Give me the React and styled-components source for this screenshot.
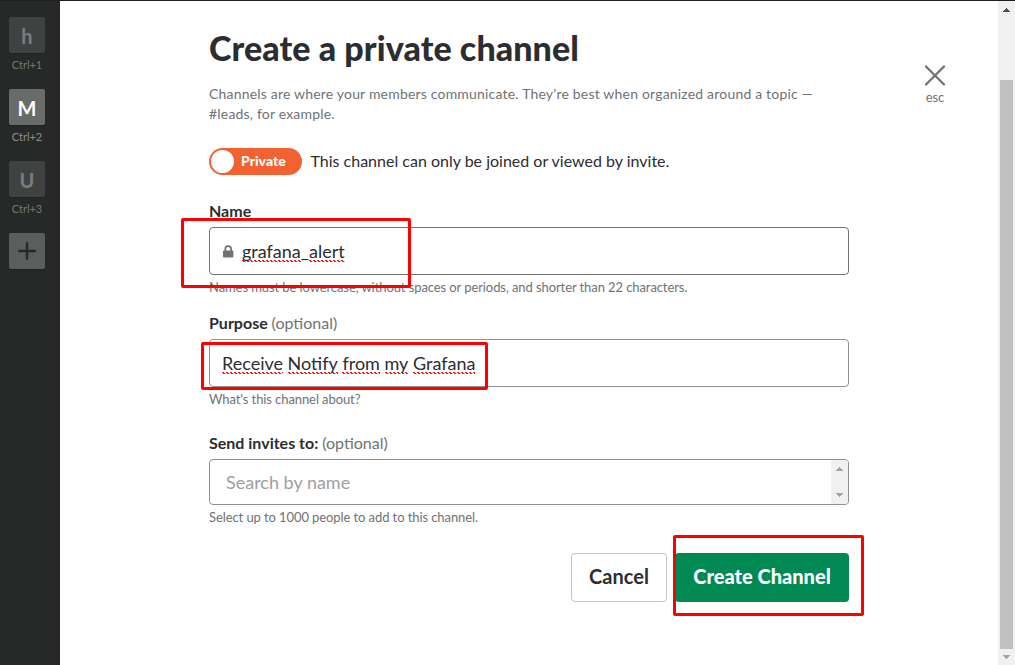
import React from "react";
import styled, { createGlobalStyle } from "styled-components";

const GlobalStyle = createGlobalStyle`
  * { box-sizing: border-box; }
  html, body { margin: 0; padding: 0; overflow: hidden; }
  body { font-family: Lato, "Open Sans", sans-serif; color: #2c2d30; background: #fff; }
`;

const Window = styled.div`
  position: relative;
  display: flex;
  width: 1015px;
  height: 665px;
  border-top: 1px solid #1f2022;
  background: #fff;
  overflow: hidden;
`;

const Sidebar = styled.nav`
  width: 60px;
  flex: none;
  display: flex;
  flex-direction: column;
  padding: 16px 0 0 9px;
  background: #272928;
`;

const Team = styled.div`
  width: 36px;
  height: 72px;
  display: flex;
  flex-direction: column;
  align-items: center;
`;

const TeamIcon = styled.div`
  width: 36px;
  height: 36px;
  flex: none;
  display: flex;
  align-items: center;
  justify-content: center;
  border-radius: 2px;
  background: ${(p) => (p.$active ? "#696b6a" : p.$add ? "#5c5e5d" : "#404241")};
  color: ${(p) => (p.$active ? "#fff" : "#7c7e7d")};
  font: 700 20px/36px Lato, sans-serif;
  padding-top: ${(p) => (p.$add ? 0 : 1)}px;
  box-shadow: 0 1px 1px rgba(0, 0, 0, 0.2);
`;

const Shortcut = styled.div`
  margin-top: 4px;
  font: 400 11px/16px Lato, sans-serif;
  white-space: nowrap;
  color: ${(p) => (p.$active ? "#8d8f8e" : "#757776")};
`;

const Main = styled.main`
  flex: 1;
  display: flex;
  align-items: flex-start;
  padding-left: 149px;
`;

const Form = styled.form`
  width: 640px;
  display: flex;
  flex-direction: column;
`;

const Title = styled.h1`
  margin: 26px 0 0;
  font-size: 34px;
  line-height: 42px;
  font-weight: 900;
  letter-spacing: 0.08px;
  white-space: nowrap;
`;

const Intro = styled.p`
  margin: 15px 0 0;
  font-size: 14px;
  line-height: 20px;
  letter-spacing: 0.19px;
  color: #717274;
`;

const PrivacyRow = styled.div`
  display: flex;
  align-items: center;
  gap: 8.5px;
  height: 27px;
  margin-top: 24px;
  font-size: 16px;
  white-space: nowrap;
`;

const PrivacyText = styled.span`
  padding-bottom: 2px;
`;

const Toggle = styled.div`
  width: 93px;
  height: 27px;
  display: flex;
  align-items: center;
  gap: 7px;
  padding-left: 2px;
  border-radius: 14px;
  background: #f26130;
  color: #fff;
  font-size: 14px;
  line-height: 18px;
  font-weight: 900;
`;

const ToggleText = styled.span`
  padding-bottom: 2px;
`;

const Knob = styled.span`
  width: 23px;
  height: 23px;
  border-radius: 50%;
  background: #fff;
`;

const Label = styled.label`
  margin-top: ${(p) => p.$top}px;
  font-size: 16px;
  line-height: 24px;
  font-weight: 700;
  white-space: nowrap;
`;

const Optional = styled.span`
  font-weight: 400;
  color: #717274;
`;

const Field = styled.div`
  display: flex;
  align-items: center;
  height: ${(p) => p.$height || 48}px;
  margin-top: 4px;
  padding-left: ${(p) => p.$indent || 12}px;
  border: 1px solid ${(p) => (p.$dark ? "#717274" : "#919193")};
  border-radius: 4px;
  font-size: 18px;
  line-height: 24px;
  white-space: pre;
  overflow: hidden;
`;

const LockIcon = styled.svg`
  width: 12px;
  height: 13px;
  margin-right: 8px;
`;

const Misspelled = styled.span`
  background:
    linear-gradient(90deg, #f01818 2px, transparent 2px) 0 calc(100% - 2px) / 4px 1px repeat-x,
    linear-gradient(90deg, #f5a0a0 1px, transparent 1px 2px, #f01818 2px 4px) 3px calc(100% - 1px) / 4px 1px repeat-x;
`;

const Placeholder = styled.span`
  flex: 1;
  color: #9e9ea0;
`;

const Hint = styled.p`
  margin: 2px 0 0;
  font-size: 13px;
  line-height: 20px;
  letter-spacing: -0.088px;
  white-space: nowrap;
  color: #717274;
`;

const FieldScroll = styled.div`
  width: 17px;
  height: 100%;
  display: flex;
  flex-direction: column;
  align-items: center;
  justify-content: space-between;
  padding: 7px 0;
  background: #f0f0f0;
`;

const Actions = styled.div`
  display: flex;
  justify-content: flex-end;
  gap: 8px;
  margin-top: 26px;
`;

const Button = styled.button`
  width: ${(p) => (p.$primary ? 174 : 96)}px;
  height: 49px;
  padding: 0 0 3px;
  border: ${(p) => (p.$primary ? "0" : "1px solid #c3c3c4")};
  border-radius: 4px;
  background: ${(p) => (p.$primary ? "#008952" : "#fff")};
  color: ${(p) => (p.$primary ? "#fff" : "#2c2d30")};
  font: ${(p) => (p.$primary ? 900 : 700)} 20px/24px Lato, sans-serif;
  white-space: nowrap;
`;

const Close = styled.div`
  width: 40px;
  margin: 63px 0 0 66px;
  display: flex;
  flex-direction: column;
  align-items: center;
  gap: 1px;
  font-size: 13px;
  line-height: 20px;
  letter-spacing: -0.1px;
  color: #717274;
`;

const Scrollbar = styled.div`
  width: 17px;
  flex: none;
  display: flex;
  flex-direction: column;
  align-items: center;
  padding: 7px 0 5px;
  background: #f0f0f0;
`;

const Thumb = styled.div`
  width: 13px;
  height: 569px;
  margin: 68px 0 6px;
  background: #c0c0c0;
`;

const Highlight = styled.div`
  position: absolute;
  left: ${(p) => p.$x}px;
  top: ${(p) => p.$y - 1}px;
  width: ${(p) => p.$w}px;
  height: ${(p) => p.$h}px;
  border: 3px solid #fe0000;
  border-radius: 2px;
  pointer-events: none;
`;

const Arrow = ({ down, color }) => (
  <svg width="7" height="4" viewBox="0 0 7 4" fill={color} shapeRendering="crispEdges">
    {down ? <path d="M0 0h7v1H6v1H5v1H4v1H3V3H2V2H1V1H0z" /> : <path d="M0 4h7V3H6V2H5V1H4V0H3v1H2v1H1v1H0z" />}
  </svg>
);

const teams = [
  { letter: "h", key: "Ctrl+1" },
  { letter: "M", key: "Ctrl+2", active: true },
  { letter: "U", key: "Ctrl+3" },
];

const purpose = ["Receive", "Notify", "from", "my", "Grafana"];

export default function App() {
  return (
    <>
      <GlobalStyle />
      <Window>
        <Sidebar>
          {teams.map((t) => (
            <Team key={t.key}>
              <TeamIcon $active={t.active}>{t.letter}</TeamIcon>
              <Shortcut $active={t.active}>{t.key}</Shortcut>
            </Team>
          ))}
          <TeamIcon $add>
            <svg width="18" height="18" viewBox="0 0 18 18" stroke="#272928" strokeWidth="2.4" strokeLinecap="round">
              <path d="M9 1.2v15.6M1.2 9h15.6" />
            </svg>
          </TeamIcon>
        </Sidebar>
        <Main>
          <Form>
            <Title>Create a private channel</Title>
            <Intro>
              Channels are where your members communicate. They’re best when organized around a topic —
              <br />
              #leads, for example.
            </Intro>
            <PrivacyRow>
              <Toggle>
                <Knob />
                <ToggleText>Private</ToggleText>
              </Toggle>
              <PrivacyText>This channel can only be joined or viewed by invite.</PrivacyText>
            </PrivacyRow>
            <Label $top={24}>Name</Label>
            <Field $dark>
              <LockIcon viewBox="0 0 12 13">
                <rect x="1" y="5.5" width="10.4" height="7" rx="1" fill="#717274" />
                <path d="M3.3 6V4a2.9 2.9 0 0 1 5.8 0v2" fill="none" stroke="#717274" strokeWidth="1.7" />
              </LockIcon>
              <Misspelled>grafana</Misspelled>_<Misspelled>alert</Misspelled>
            </Field>
            <Hint>Names must be lowercase, without spaces or periods, and shorter than 22 characters.</Hint>
            <Label $top={14}>
              Purpose <Optional>(optional)</Optional>
            </Label>
            <Field>
              {purpose.map((word, i) => (
                <React.Fragment key={word}>
                  {i > 0 && <span> </span>}
                  <Misspelled>{word}</Misspelled>
                </React.Fragment>
              ))}
            </Field>
            <Hint>What's this channel about?</Hint>
            <Label $top={22}>
              Send invites to: <Optional>(optional)</Optional>
            </Label>
            <Field $height={46} $indent={16}>
              <Placeholder>Search by name</Placeholder>
              <FieldScroll>
                <Arrow color="#a3a3a3" />
                <Arrow down color="#a3a3a3" />
              </FieldScroll>
            </Field>
            <Hint>Select up to 1000 people to add to this channel.</Hint>
            <Actions>
              <Button type="button">Cancel</Button>
              <Button type="button" $primary>Create Channel</Button>
            </Actions>
          </Form>
          <Close>
            <svg width="22" height="22" viewBox="0 0 22 22" stroke="#717274" strokeWidth="2.3" strokeLinecap="round">
              <path d="M2 2.5l18 18M20 2.5L2 20.5" />
            </svg>
            esc
          </Close>
        </Main>
        <Scrollbar>
          <Arrow color="#505050" />
          <Thumb />
          <Arrow down color="#a3a3a3" />
        </Scrollbar>
        <Highlight $x={181} $y={218} $w={230} $h={70} />
        <Highlight $x={201} $y={342} $w={287} $h={48} />
        <Highlight $x={673} $y={535} $w={191} $h={81} />
      </Window>
    </>
  );
}
